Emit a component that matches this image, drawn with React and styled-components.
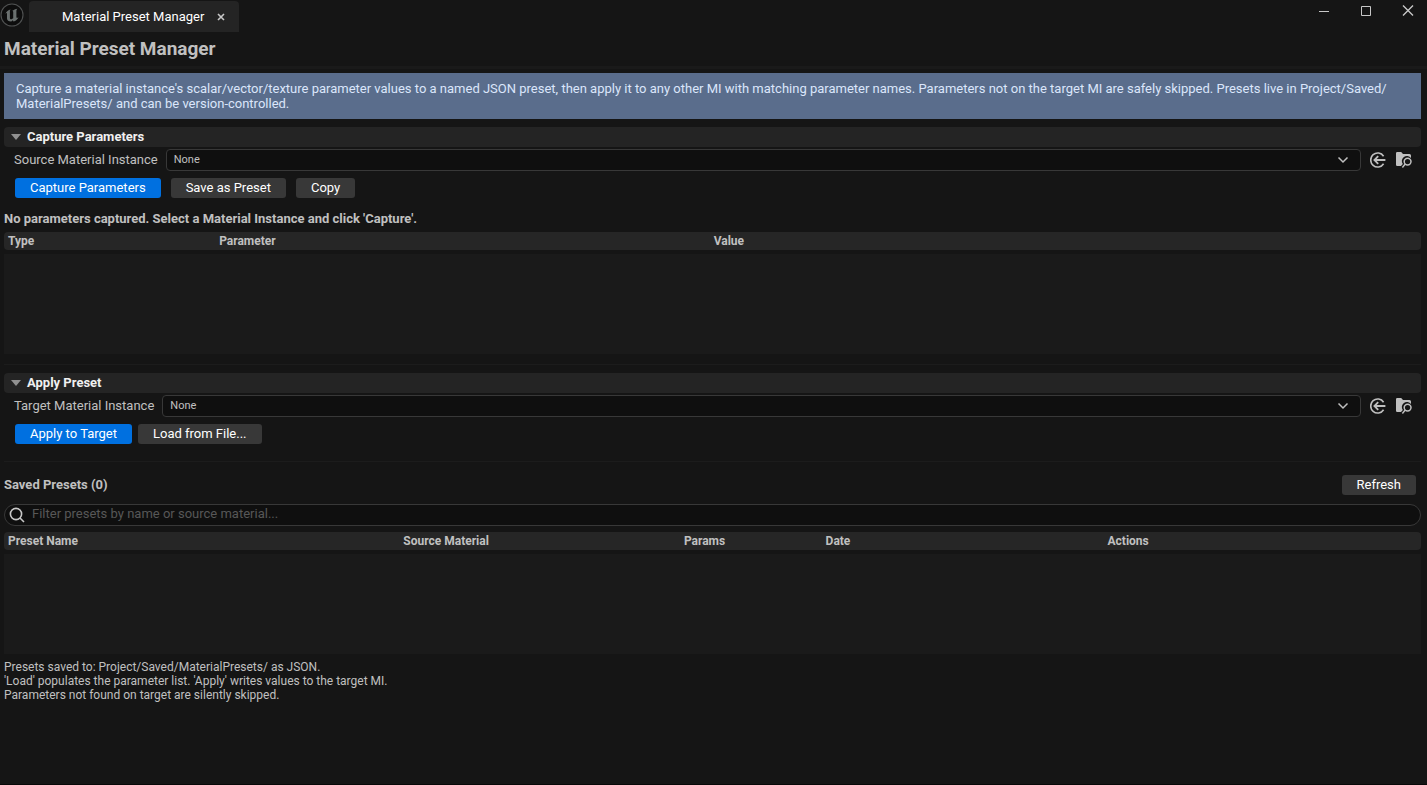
import React, { useState } from 'react';
import styled, { createGlobalStyle } from 'styled-components';

const captureColumns = [
  { label: 'Type', width: '14.9%' },
  { label: 'Parameter', width: '34.9%' },
  { label: 'Value' },
];

const presetColumns = [
  { label: 'Preset Name', width: '27.9%' },
  { label: 'Source Material', width: '19.8%' },
  { label: 'Params', width: '10%' },
  { label: 'Date', width: '19.9%' },
  { label: 'Actions' },
];

const Logo = () => (
  <svg width="24" height="24" viewBox="0 0 24 24" aria-hidden="true">
    <circle cx="12" cy="12" r="11" fill="#0d0d0d" stroke="#505252" strokeWidth="1.1" />
    <path
      d="M5.2 11.2C6.2 8.6 8.3 6.9 10.7 6.4L9.9 7.6V14.9C9.9 16 10.6 16.5 11.5 16.2L13.2 15.2V9C13.2 8.3 12.9 8 12.2 8C13.6 6.9 15.4 6 17.5 5.7C16.7 6.5 16.4 7.1 16.4 8.1V14.1C16.4 15.1 17.1 15.2 18.5 14.2C17.6 16.3 15.7 17.9 13.5 18.5L12.8 17.3L11.3 18.6C8.8 18.7 7 17.4 7 15.6V10.6C7 9.7 6.2 10 5.2 11.2Z"
      fill="#6a706f"
    />
  </svg>
);

const ArrowLeftCircle = () => (
  <svg width="16" height="16" viewBox="0 0 16 16" fill="none" stroke="#c0c0c0" strokeWidth="1.6" aria-hidden="true">
    <path d="M13.6 4.2A7 7 0 1 0 13.6 11.8" />
    <path d="M15.4 8H4.4M8.2 4.2L4.4 8L8.2 11.8" strokeWidth="1.8" />
  </svg>
);

const BrowseFolder = () => (
  <svg width="18" height="18" viewBox="0 0 18 18" fill="none" aria-hidden="true">
    <path d="M1 2.2Q1 1 2.2 1H6.2L8 3H14.5Q16 3 16 4.5V7A5 5 0 0 0 7.8 13L6 15H2.2Q1 15 1 13.8Z" fill="#c0c0c0" />
    <circle cx="12.6" cy="10.6" r="3.4" stroke="#c0c0c0" strokeWidth="1.5" />
    <path d="M10.2 13L7.4 16.4" stroke="#c0c0c0" strokeWidth="1.5" />
  </svg>
);

const AssetPicker = ({ id, label }) => (
  <PickerRow>
    <PickerLabel htmlFor={id}>{label}</PickerLabel>
    <SelectBox>
      <Select id={id} defaultValue="none">
        <option value="none">None</option>
      </Select>
      <Chevron width="12" height="8" viewBox="0 0 12 8" aria-hidden="true">
        <path d="M1.5 1.5L6 6L10.5 1.5" fill="none" stroke="#c0c0c0" strokeWidth="1.5" />
      </Chevron>
    </SelectBox>
    <IconButton type="button" aria-label="Use selected asset">
      <ArrowLeftCircle />
    </IconButton>
    <IconButton type="button" aria-label="Browse to asset">
      <BrowseFolder />
    </IconButton>
  </PickerRow>
);

const Section = ({ title, children }) => {
  const [open, setOpen] = useState(true);

  return (
    <section>
      <SectionHeader type="button" aria-expanded={open} onClick={() => setOpen(!open)}>
        <Triangle $open={open} />
        {title}
      </SectionHeader>
      {open && children}
    </section>
  );
};

const ListTable = ({ columns, label }) => (
  <Table aria-label={label}>
    <thead>
      <tr>
        {columns.map((column) => (
          <HeadCell key={column.label} scope="col" $width={column.width}>
            {column.label}
          </HeadCell>
        ))}
      </tr>
    </thead>
    <tbody>
      <tr>
        <BodyCell colSpan={columns.length}>
          <EmptyList />
        </BodyCell>
      </tr>
    </tbody>
  </Table>
);

const App = () => {
  const [filter, setFilter] = useState('');

  return (
    <Page>
      <GlobalStyle />
      <TitleBar>
        <Logo />
        <Tab>
          Material Preset Manager
          <TabClose type="button" aria-label="Close tab">
            <svg width="8" height="8" viewBox="0 0 8 8" aria-hidden="true">
              <path d="M1 1L7 7M7 1L1 7" stroke="#c8c8c8" strokeWidth="1.6" />
            </svg>
          </TabClose>
        </Tab>
        <WindowControls>
          <WindowButton type="button" aria-label="Minimize">
            <svg width="12" height="12" viewBox="0 0 12 12" aria-hidden="true">
              <path d="M1 6.5H11" stroke="#c8c8c8" />
            </svg>
          </WindowButton>
          <WindowButton type="button" aria-label="Maximize">
            <svg width="12" height="12" viewBox="0 0 12 12" aria-hidden="true">
              <path d="M1.5 1.5H10.5V10.5H1.5Z" fill="none" stroke="#c8c8c8" />
            </svg>
          </WindowButton>
          <WindowButton type="button" aria-label="Close">
            <svg width="12" height="12" viewBox="0 0 12 12" aria-hidden="true">
              <path d="M1 0.5L11 10.5M11 0.5L1 10.5" stroke="#c8c8c8" strokeWidth="1.4" />
            </svg>
          </WindowButton>
        </WindowControls>
      </TitleBar>

      <Title>Material Preset Manager</Title>
      <TitleRule />

      <Content>
        <Banner>
          Capture a material instance's scalar/vector/texture parameter values to a named JSON preset, then apply it to
          any other MI with matching parameter names. Parameters not on the target MI are safely skipped. Presets live
          in Project/Saved/<wbr />MaterialPresets/ and can be version-controlled.
        </Banner>

        <Section title="Capture Parameters">
          <AssetPicker id="source" label="Source Material Instance" />
          <ButtonRow $gap="10px">
            <Button type="button" $primary>Capture Parameters</Button>
            <Button type="button">Save as Preset</Button>
            <Button type="button">Copy</Button>
          </ButtonRow>
          <Status>No parameters captured. Select a Material Instance and click 'Capture'.</Status>
          <ListTable columns={captureColumns} label="Captured parameters" />
        </Section>

        <Rule />

        <Section title="Apply Preset">
          <AssetPicker id="target" label="Target Material Instance" />
          <ButtonRow $gap="6px">
            <Button type="button" $primary>Apply to Target</Button>
            <Button type="button">Load from File...</Button>
          </ButtonRow>
        </Section>

        <Rule $wide />

        <SavedHeader>
          <SavedTitle>Saved Presets (0)</SavedTitle>
          <Button type="button">Refresh</Button>
        </SavedHeader>
        <SearchBox>
          <svg width="16" height="16" viewBox="0 0 16 16" fill="none" stroke="#c8c8c8" strokeWidth="1.6" aria-hidden="true">
            <circle cx="7" cy="7" r="5.6" />
            <path d="M11 11L15 15" />
          </svg>
          <SearchInput
            type="text"
            aria-label="Filter presets"
            placeholder="Filter presets by name or source material..."
            value={filter}
            onChange={(e) => setFilter(e.target.value)}
          />
        </SearchBox>
        <ListTable columns={presetColumns} label="Saved presets" />

        <Notes>
          Presets saved to: Project/Saved/MaterialPresets/ as JSON.
          <br />
          'Load' populates the parameter list. 'Apply' writes values to the target MI.
          <br />
          Parameters not found on target are silently skipped.
        </Notes>
      </Content>
    </Page>
  );
};

const GlobalStyle = createGlobalStyle`
  * {
    box-sizing: border-box;
  }

  body {
    margin: 0;
    background: #151515;
    color: #c0c0c0;
    font: 13px/15px Roboto, sans-serif;
  }

  button,
  input,
  select {
    font: inherit;
  }
`;

const Page = styled.div`
  min-height: 100vh;
  border-bottom: 1px solid #080808;
`;

const TitleBar = styled.header`
  display: flex;
  align-items: flex-start;
  height: 32px;

  & > svg {
    margin-top: 3px;
    flex: none;
  }
`;

const Tab = styled.div`
  display: flex;
  align-items: center;
  justify-content: space-between;
  width: 210px;
  height: 31px;
  margin: 1px 0 0 5px;
  padding: 0 10px 0 33px;
  border-radius: 4px 4px 0 0;
  background: #242424;
  color: #fff;
`;

const TabClose = styled.button`
  display: flex;
  padding: 4px;
  border: 0;
  background: none;
`;

const WindowControls = styled.div`
  display: flex;
  margin-left: auto;
  padding-right: 5px;
  gap: 14px;
`;

const WindowButton = styled.button`
  display: flex;
  padding: 5px 8px;
  border: 0;
  background: none;
`;

const Title = styled.h1`
  margin: 0;
  padding: 6px 4px;
  font-size: 19px;
  line-height: 22px;
  font-weight: bold;
`;

const TitleRule = styled.div`
  height: 3px;
  background: #1a1a1a;
`;

const Content = styled.main`
  padding: 4px 6px 0 4px;
`;

const Banner = styled.p`
  margin: 0 0 8px;
  padding: 8px 12px;
  background: #5a6d8c;
  color: #dbe6fb;
`;

const SectionHeader = styled.button`
  display: flex;
  align-items: center;
  gap: 6px;
  width: 100%;
  height: 20px;
  padding: 0 7px 2px;
  border: 0;
  border-radius: 4px;
  background: #242424;
  color: #f0f0f0;
  font-weight: bold;
`;

const Triangle = styled.span`
  margin-top: 2px;
  border: 5px solid transparent;
  border-top: 6px solid #909090;
  border-bottom: 0;
  transform: ${(props) => (props.$open ? 'none' : 'rotate(-90deg)')};
`;

const PickerRow = styled.div`
  display: flex;
  align-items: center;
  padding: 2px 8px 0 10px;
`;

const PickerLabel = styled.label`
  margin-right: 8px;
  padding-bottom: 2px;
`;

const SelectBox = styled.div`
  position: relative;
  flex: 1;
  margin-right: 8px;
`;

const Select = styled.select`
  display: block;
  width: 100%;
  height: 22px;
  padding: 0 7px 2px;
  appearance: none;
  border: 1px solid #383838;
  border-radius: 4px;
  background: #0f0f0f;
  color: #c0c0c0;
  font-size: 11px;
`;

const Chevron = styled.svg`
  position: absolute;
  top: 7px;
  right: 12px;
  pointer-events: none;
`;

const IconButton = styled.button`
  display: flex;
  align-items: center;
  justify-content: center;
  width: 18px;
  height: 18px;
  padding: 0;
  border: 0;
  background: none;

  & + & {
    margin-left: 8px;
  }
`;

const ButtonRow = styled.div`
  display: flex;
  gap: ${(props) => props.$gap};
  padding: 7px 11px 0;
`;

const Button = styled.button`
  height: 20px;
  padding: 0 15px 2px;
  border: 0;
  border-radius: 3px;
  background: ${(props) => (props.$primary ? '#0070e0' : '#383838')};
  color: #fff;
`;

const Status = styled.p`
  margin: 13px 0 6px;
  font-weight: bold;
`;

const Table = styled.table`
  width: 100%;
  table-layout: fixed;
  border-collapse: separate;
  border-spacing: 0;
`;

const HeadCell = styled.th`
  width: ${(props) => props.$width || 'auto'};
  height: 18px;
  padding: 0 4px;
  background: #262626;
  font-size: 12px;
  line-height: 18px;
  font-weight: bold;
  text-align: left;

  &:first-child {
    border-radius: 4px 0 0 4px;
  }

  &:last-child {
    border-radius: 0 4px 4px 0;
  }
`;

const BodyCell = styled.td`
  padding: 4px 0 0;
`;

const EmptyList = styled.div`
  height: 100px;
  background: #1a1a1a;
`;

const Rule = styled.hr`
  height: 1px;
  margin: ${(props) => (props.$wide ? '17px 0 13px' : '10px 0 8px')};
  border: 0;
  background: #1c1c1c;
`;

const SavedHeader = styled.div`
  display: flex;
  align-items: center;
  justify-content: space-between;
  padding-right: 5px;
`;

const SavedTitle = styled.h2`
  margin: 0;
  padding-bottom: 2px;
  font-size: 13px;
  font-weight: bold;
`;

const SearchBox = styled.div`
  display: flex;
  align-items: center;
  gap: 7px;
  height: 22px;
  margin: 9px 0 6px;
  padding: 0 4px;
  border: 1px solid #383838;
  border-radius: 11px;
  background: #0f0f0f;
`;

const SearchInput = styled.input`
  flex: 1;
  height: 18px;
  padding: 0 0 3px;
  border: 0;
  outline: none;
  background: none;
  color: #c0c0c0;

  &::placeholder {
    color: #575757;
  }
`;

const Notes = styled.p`
  margin: 6px 0 0;
  font-size: 12px;
  line-height: 14px;
`;

export default App;
